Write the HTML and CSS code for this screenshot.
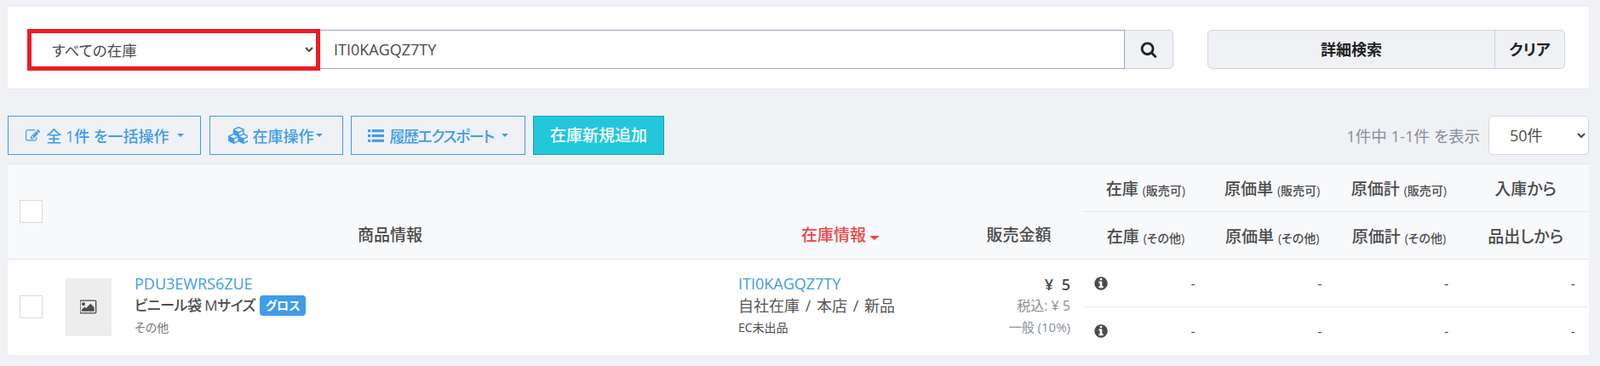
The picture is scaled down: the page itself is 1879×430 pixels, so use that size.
FILE: index.html
```html
<!DOCTYPE html>
<html>
<head>
    <meta charset="utf-8" />
    <title>在庫一覧</title>
    <link rel="stylesheet" href="styles.css">
</head>
<body>
    <div class="search-panel">
        <select class="search-type">
            <option>すべての在庫</option>
        </select>
        <input type="text" class="search-input" value="ITI0KAGQZ7TY" />
        <a class="search-btn">
            <svg class="ico-search" viewBox="0 0 1792 1792"><path d="M1216 832q0-185-131.5-316.5t-316.5-131.5-316.5 131.5-131.5 316.5 131.5 316.5 316.5 131.5 316.5-131.5 131.5-316.5zm512 832q0 52-38 90t-90 38q-54 0-90-38l-343-342q-179 124-399 124-143 0-273.5-55.5t-225-150-150-225-55.5-273.5 55.5-273.5 150-225 225-150 273.5-55.5 273.5 55.5 225 150 150 225 55.5 273.5q0 220-124 399l343 343q37 37 37 90z"/></svg>
        </a>
        <div class="detail-group">
            <a class="detail-btn">詳細検索</a>
            <a class="clear-btn">クリア</a>
        </div>
    </div>

    <div class="toolbar">
        <a class="tool-btn btn-bulk">
            <svg class="ico" viewBox="0 0 1792 1792"><path d="M888 1184l116-116-152-152-116 116v56h96v96h56zm440-720q-16-16-33 1l-350 350q-17 17-1 33t33-1l350-350q17-17 1-33zm80 594v190q0 119-84.5 203.5t-203.5 84.5h-832q-119 0-203.5-84.5t-84.5-203.5v-832q0-119 84.5-203.5t203.5-84.5h832q63 0 117 25 15 7 18 23 3 17-9 29l-49 49q-14 14-32 8-23-6-45-6h-832q-66 0-113 47t-47 113v832q0 66 47 113t113 47h832q66 0 113-47t47-113v-126q0-13 9-22l64-64q15-15 35-7t20 29zm-96-738l288 288-672 672h-288v-288zm444 132l-92 92-288-288 92-92q28-28 68-28t68 28l152 152q28 28 28 68t-28 68z"/></svg>
            <span>全 1件 を一括操作</span>
            <i class="caret caret-wide"></i>
        </a>
        <a class="tool-btn btn-stock">
            <svg class="ico ico-cubes" viewBox="0 0 2048 1792"><path d="M640 1632l384-192v-314l-384 164v342zm-64-454l404-173-404-173-404 173zm1088 454l384-192v-314l-384 164v342zm-64-454l404-173-404-173-404 173zm-448-293l384-165v-266l-384 164v267zm-64-379l441-189-441-189-441 189zm1088 518v416q0 36-19 67t-52 47l-448 224q-25 14-57 14t-57-14l-448-224q-4-2-7-4-2 2-7 4l-448 224q-25 14-57 14t-57-14l-448-224q-33-16-52-47t-19-67v-416q0-38 21.5-70t56.5-48l434-186v-400q0-38 21.5-70t56.5-48l448-192q23-10 50-10t50 10l448 192q35 16 56.5 48t21.5 70v400l434 186q36 16 57 48t21 70z"/></svg>
            <span>在庫操作</span><i class="caret"></i>
        </a>
        <a class="tool-btn btn-export">
            <svg class="ico" viewBox="0 0 18 16"><rect x="0" y="1" width="3" height="3"/><rect x="4.5" y="1" width="13.5" height="3"/><rect x="0" y="6.5" width="3" height="3"/><rect x="4.5" y="6.5" width="13.5" height="3"/><rect x="0" y="12" width="3" height="3"/><rect x="4.5" y="12" width="13.5" height="3"/></svg>
            <span class="export-label">履歴エクスポート</span>
            <i class="caret caret-wide"></i>
        </a>
        <a class="add-btn">在庫新規追加</a>
        <div class="pager">
            <span class="pager-text">1件中 1-1件 を表示</span>
            <select class="pager-size">
                <option>50件</option>
            </select>
        </div>
    </div>

    <table class="stock-table">
        <colgroup>
            <col class="c-check" />
            <col class="c-product" />
            <col class="c-stock" />
            <col class="c-price" />
            <col class="c-num" />
            <col class="c-num" />
            <col class="c-num" />
            <col class="c-num" />
        </colgroup>
        <thead>
            <tr>
                <th rowspan="2" class="th-check"><span class="check"></span></th>
                <th rowspan="2" class="th-low">商品情報</th>
                <th rowspan="2" class="th-low sorted">在庫情報<i class="caret caret-sort"></i></th>
                <th rowspan="2" class="th-low">販売金額</th>
                <th class="th-num">在庫 <small>(販売可)</small></th>
                <th class="th-num">原価単 <small>(販売可)</small></th>
                <th class="th-num">原価計 <small>(販売可)</small></th>
                <th class="th-num">入庫から</th>
            </tr>
            <tr>
                <th class="th-num">在庫 <small>(その他)</small></th>
                <th class="th-num">原価単 <small>(その他)</small></th>
                <th class="th-num">原価計 <small>(その他)</small></th>
                <th class="th-num">品出しから</th>
            </tr>
        </thead>
        <tbody>
            <tr>
                <td rowspan="2" class="td-check"><span class="check"></span></td>
                <td rowspan="2">
                    <div class="product">
                        <div class="thumb">
                            <svg class="ico-picture" viewBox="0 0 1920 1792"><path d="M576 576q0 80-56 136t-136 56-136-56-56-136 56-136 136-56 136 56 56 136zm1024 384v448h-1408v-192l320-320 160 160 512-512zm96-704h-1600q-13 0-22.5 9.5t-9.5 22.5v1216q0 13 9.5 22.5t22.5 9.5h1600q13 0 22.5-9.5t9.5-22.5v-1216q0-13-9.5-22.5t-22.5-9.5zm160 32v1216q0 66-47 113t-113 47h-1600q-66 0-113-47t-47-113v-1216q0-66 47-113t113-47h1600q66 0 113 47t47 113z"/></svg>
                        </div>
                        <div class="product-text">
                            <a class="code">PDU3EWRS6ZUE</a>
                            <div class="name">ビニール袋 Mサイズ <span class="badge">グロス</span></div>
                            <div class="sub">その他</div>
                        </div>
                    </div>
                </td>
                <td rowspan="2" class="td-stock">
                    <a class="code">ITI0KAGQZ7TY</a>
                    <div class="place">自社在庫 / 本店 / 新品</div>
                    <div class="ec">EC未出品</div>
                </td>
                <td rowspan="2" class="td-price">
                    <div class="yen">¥ 5</div>
                    <div class="tax">税込: ¥ 5</div>
                    <div class="tax-kind">一般 (10%)</div>
                </td>
                <td class="td-num">
                    <div class="num-first">
                        <svg class="ico-info" viewBox="0 0 1792 1792"><path d="M1152 1376v-160q0-14-9-23t-23-9h-96v-512q0-14-9-23t-23-9h-320q-14 0-23 9t-9 23v160q0 14 9 23t23 9h96v320h-96q-14 0-23 9t-9 23v160q0 14 9 23t23 9h448q14 0 23-9t9-23zm-128-896v-160q0-14-9-23t-23-9h-192q-14 0-23 9t-9 23v160q0 14 9 23t23 9h192q14 0 23-9t9-23zm640 416q0 209-103 385.5t-279.5 279.5-385.5 103-385.5-103-279.5-279.5-103-385.5 103-385.5 279.5-279.5 385.5-103 385.5 103 279.5 279.5 103 385.5z"/></svg>
                        <span>-</span>
                    </div>
                </td>
                <td class="td-num">-</td>
                <td class="td-num">-</td>
                <td class="td-num">-</td>
            </tr>
            <tr>
                <td class="td-num">
                    <div class="num-first">
                        <svg class="ico-info" viewBox="0 0 1792 1792"><path d="M1152 1376v-160q0-14-9-23t-23-9h-96v-512q0-14-9-23t-23-9h-320q-14 0-23 9t-9 23v160q0 14 9 23t23 9h96v320h-96q-14 0-23 9t-9 23v160q0 14 9 23t23 9h448q14 0 23-9t9-23zm-128-896v-160q0-14-9-23t-23-9h-192q-14 0-23 9t-9 23v160q0 14 9 23t23 9h192q14 0 23-9t9-23zm640 416q0 209-103 385.5t-279.5 279.5-385.5 103-385.5-103-279.5-279.5-103-385.5 103-385.5 279.5-279.5 385.5-103 385.5 103 279.5 279.5 103 385.5z"/></svg>
                        <span>-</span>
                    </div>
                </td>
                <td class="td-num">-</td>
                <td class="td-num">-</td>
                <td class="td-num">-</td>
            </tr>
        </tbody>
    </table>
</body>
</html>
```

FILE: styles.css
```css
* {
    padding: 0;
    margin: 0;
    box-sizing: border-box;
    font-feature-settings: "palt";
}

html, body {
    height: 100%;
    overflow: hidden;
}

body {
    padding: 8px 13px 0 9px;
    background: #eff1f5;
    color: #4a4a4a;
    font-family: "Open Sans", "Noto Sans CJK JP", sans-serif;
    font-size: 18px;
}

/* search */
.search-panel {
    height: 97px;
    padding: 26px 28px 0 23px;
    background: #fff;
    border-bottom: 1px solid #e6e8ee;
    display: flex;
    align-items: flex-start;
}

.search-type {
    width: 344px;
    height: 49px;
    padding-left: 20px;
    border: 5px solid #ed1c24;
    border-radius: 0;
    background: #fff;
    color: #4a4a4a;
    font: inherit;
    font-size: 17.5px;
    outline: none;
}

.search-input {
    width: 945px;
    height: 46px;
    margin-top: 1px;
    padding-left: 16px;
    border: 1px solid #9aa7bb;
    border-left: none;
    color: #4a4a4a;
    font: inherit;
    outline: none;
}

.search-btn {
    width: 57px;
    height: 46px;
    margin-top: 1px;
    background: #eff1f5;
    border: 1px solid #cfd4de;
    border-left: none;
    border-radius: 0 5px 5px 0;
    display: flex;
    align-items: center;
    justify-content: center;
}

.ico-search {
    width: 20px;
    height: 20px;
    fill: #222;
}

.detail-group {
    width: 420px;
    height: 46px;
    margin: 1px 0 0 40px;
    background: #eff1f5;
    border: 1px solid #cfd4de;
    border-radius: 5px;
    display: flex;
    color: #222;
    font-weight: 600;
    line-height: 44px;
    text-align: center;
}

.detail-btn {
    flex: 1;
    border-right: 1px solid #cfd4de;
}

.clear-btn {
    width: 81px;
}

/* toolbar */
.toolbar {
    height: 46px;
    margin-top: 31px;
    display: flex;
    align-items: flex-start;
    gap: 9px;
}

.tool-btn {
    height: 46px;
    border: 1px solid #3f9ce8;
    color: #3f9ce8;
    font-weight: 500;
    display: flex;
    align-items: center;
    justify-content: center;
    white-space: nowrap;
}

.btn-bulk { width: 227px; margin-right: 1px; }
.btn-stock { width: 157px; padding-right: 3px; }
.btn-export { width: 205px; }

.export-label {
    letter-spacing: -1.5px;
}

.ico {
    width: 19px;
    height: 17px;
    margin-right: 6px;
    fill: #3f9ce8;
}

.ico-cubes {
    width: 23px;
    height: 20px;
    margin-right: 6px;
}

.caret {
    display: inline-block;
    width: 0;
    height: 0;
    margin-left: 2px;
    border-top: 4px solid currentColor;
    border-left: 4px solid transparent;
    border-right: 4px solid transparent;
}

.caret-wide {
    margin-left: 9px;
}

.add-btn {
    width: 154px;
    height: 46px;
    background: #22c7dc;
    border: 1px solid #1a9fb5;
    color: #fff;
    font-size: 19px;
    font-weight: 500;
    line-height: 44px;
    text-align: center;
}

.pager {
    margin-left: auto;
    display: flex;
    align-items: center;
    gap: 10px;
}

.pager-text {
    color: #8a8f98;
    font-size: 18.5px;
}

.pager-size {
    width: 118px;
    height: 46px;
    padding-left: 20px;
    background: #fff;
    border: 1px solid #d3d7e0;
    border-radius: 5px;
    color: #4a4a4a;
    font: inherit;
    outline: none;
}

/* table */
.stock-table {
    width: 100%;
    margin-top: 10px;
    table-layout: fixed;
    border-collapse: collapse;
    background: #fff;
    border-top: 1px solid #e4e6ec;
}

.c-check { width: 55px; }
.c-product { width: 788px; }
.c-stock { width: 270px; }
.c-price { width: 149px; }

.stock-table thead {
    background: #f8f9fb;
    border-bottom: 1px solid #e4e6ec;
}

.stock-table th {
    font-size: 19px;
    font-weight: 500;
    height: 56px;
    text-align: center;
}

.th-num {
    border-bottom: 1px solid #e8eaef;
}

.stock-table tr:last-child .th-num {
    border-bottom: none;
}

.stock-table small {
    font-size: 14px;
}

.th-check {
    vertical-align: top;
    padding: 42px 0 0 14px;
}

.th-low {
    vertical-align: bottom;
    line-height: 56px;
}

.sorted {
    color: #ef4444;
}

.caret-sort {
    margin-left: 4px;
    vertical-align: 1px;
    border-top-width: 5px;
    border-left-width: 6px;
    border-right-width: 6px;
}

.check {
    display: block;
    width: 27px;
    height: 27px;
    background: #fff;
    border: 1px solid #d9dbe0;
}

.td-check {
    padding-left: 14px;
    vertical-align: middle;
}

.product {
    display: flex;
    gap: 27px;
    padding-left: 13px;
    align-items: center;
}

.product-text {
    padding-bottom: 4px;
}

.thumb {
    width: 54px;
    height: 68px;
    background: #ededed;
    display: flex;
    align-items: center;
    justify-content: center;
}

.ico-picture {
    width: 20px;
    height: 19px;
    fill: #4a4a4a;
}

.code {
    display: block;
    color: #3f9ce8;
    line-height: 25px;
}

.name {
    font-size: 17px;
    letter-spacing: -0.5px;
    line-height: 26px;
    font-weight: 500;
}

.badge {
    display: inline-block;
    margin-left: 1px;
    padding: 0 7px;
    background: #3f9ce8;
    border-radius: 4px;
    color: #fff;
    font-size: 14px;
    font-weight: 700;
    letter-spacing: 0;
    line-height: 24px;
    vertical-align: 1px;
}

.sub, .ec {
    font-size: 14px;
    line-height: 25px;
}

.sub {
    color: #777;
}

.td-stock {
    padding: 0 0 4px 15px;
}

.place {
    color: #555;
    line-height: 26px;
    word-spacing: 2px;
}

.td-price {
    padding: 0 14px 4px 0;
    text-align: right;
}

.yen {
    font-weight: 600;
    line-height: 25px;
    word-spacing: 5px;
}

.tax, .tax-kind {
    color: #8a8f98;
    font-size: 16px;
    line-height: 25px;
}

.tax-kind {
    font-size: 15px;
    line-height: 24px;
}

.td-num {
    height: 56px;
    padding-right: 16px;
    text-align: right;
    font-size: 16px;
}

.num-first {
    display: flex;
    align-items: center;
    justify-content: space-between;
    padding-left: 13px;
}

.stock-table tbody tr:first-child .td-num {
    border-bottom: 1px solid #e8eaef;
}

.ico-info {
    width: 18px;
    height: 18px;
    fill: #4a4a4a;
}
```
